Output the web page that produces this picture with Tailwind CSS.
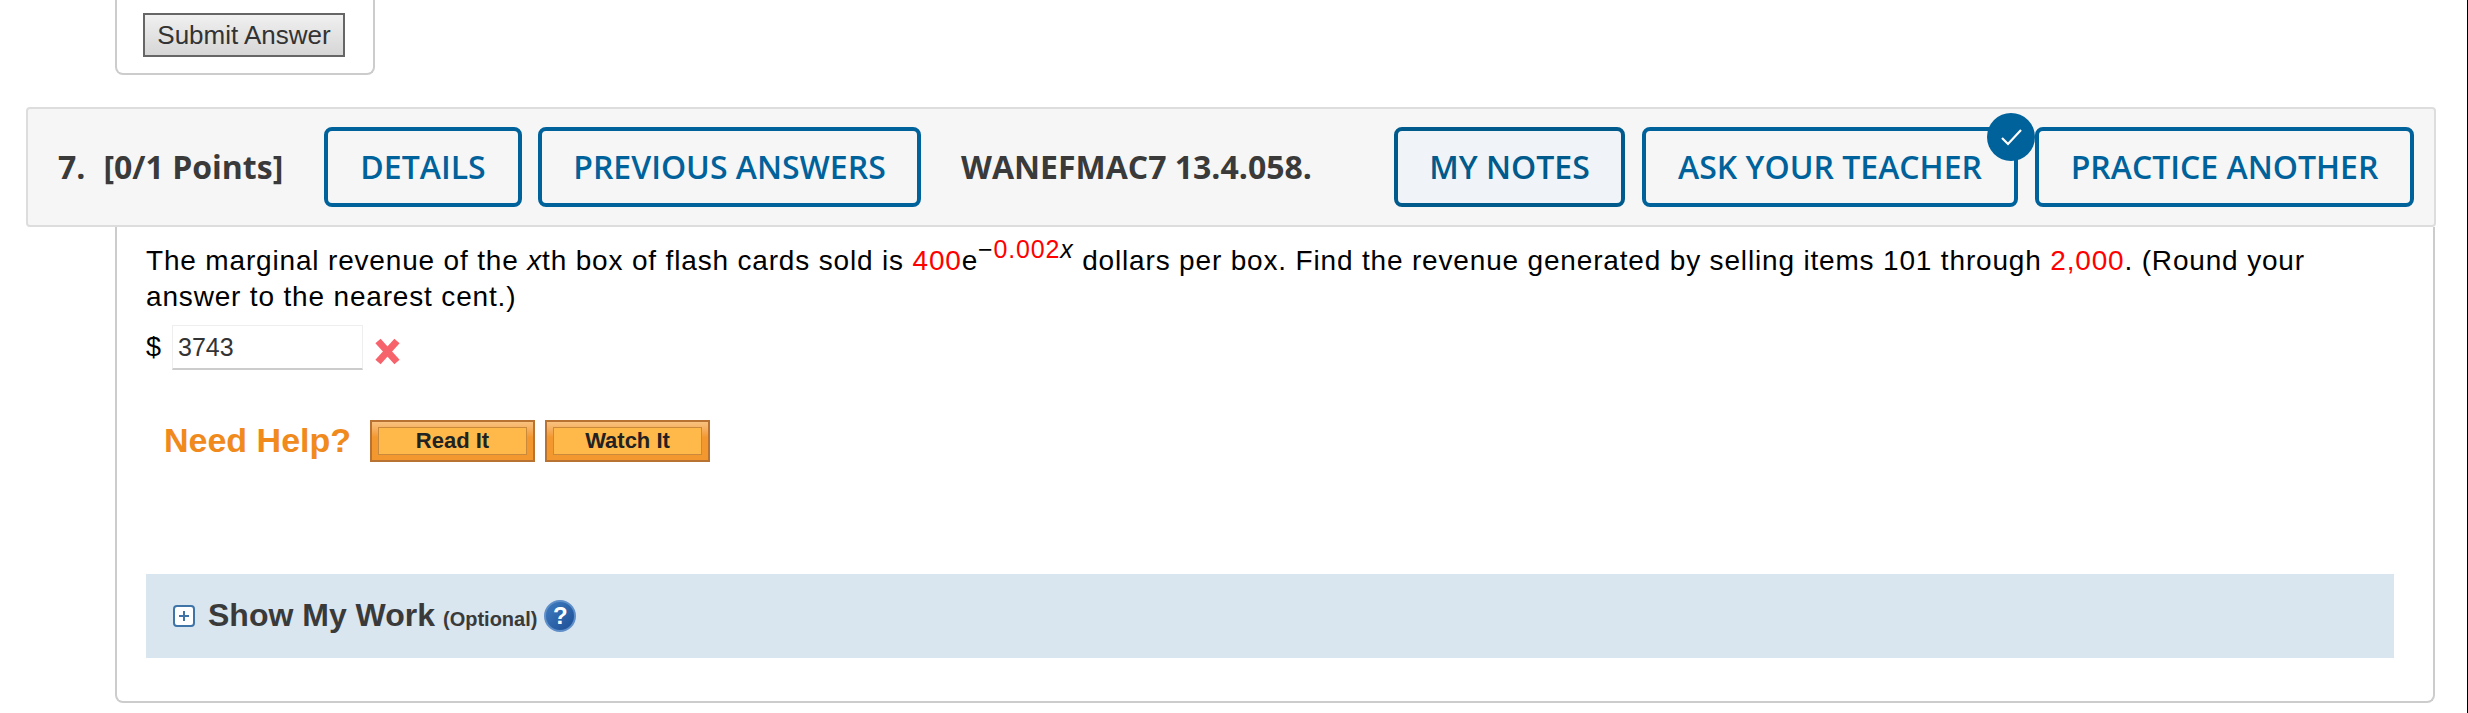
<!DOCTYPE html>
<html lang="en">

<head>
    <meta charset="UTF-8">
    <title>Question 7</title>
    <script src="https://cdn.jsdelivr.net/npm/@tailwindcss/browser@4"></script>
</head>

<body class="bg-white h-[713px] overflow-hidden font-['Liberation_Sans',sans-serif]">
    <div class="h-[713px] w-[2468px] overflow-hidden border-r border-black">

        <!-- previous question, cut off at the top -->
        <div class="ml-[115px] w-[260px] h-[75px] border-x-2 border-b-2 border-[#ccc] rounded-b-lg pl-[26px] pt-[13px]">
            <button class="w-[202px] h-[44px] border-2 border-[#666] bg-gradient-to-b from-[#f0f0f0] to-[#d6d6d6] text-[26px] text-[#333] leading-none">Submit Answer</button>
        </div>

        <!-- header bar -->
        <div class="relative mt-[32px] ml-[26px] w-[2410px] h-[120px] flex items-center bg-[#f6f6f6] border-2 border-[#ddd] rounded font-['Open_Sans',sans-serif] font-semibold text-[32px] text-[#3a3a3a]">
            <div class="w-[296px] pl-[30px] font-bold text-[32px] flex gap-[18px]"><span>7.</span><span>[0/1 Points]</span></div>
            <a class="w-[198px] h-[80px] flex items-center justify-center border-4 border-[#00629b] rounded-lg text-[#00629b]">DETAILS</a>
            <a class="ml-[16px] w-[383px] h-[80px] flex items-center justify-center border-4 border-[#00629b] rounded-lg text-[#00629b]">PREVIOUS ANSWERS</a>
            <span class="ml-[40px] w-[433px] font-bold text-[32px]">WANEFMAC7 13.4.058.</span>
            <a class="w-[231px] h-[80px] flex items-center justify-center border-4 border-[#005a8c] rounded-lg bg-[#f0f4f8] text-[#005a8c]">MY NOTES</a>
            <a class="ml-[17px] w-[376px] h-[80px] flex items-center justify-center border-4 border-[#00629b] rounded-lg text-[#00629b]">ASK YOUR TEACHER</a>
            <a class="ml-[17px] w-[379px] h-[80px] flex items-center justify-center border-4 border-[#00629b] rounded-lg text-[#00629b]">PRACTICE ANOTHER</a>
            <!-- has-note badge -->
            <span class="absolute left-[1959px] top-[4px] w-[48px] h-[48px] rounded-full bg-[#00629b] flex items-center justify-center">
                <svg width="24" height="24" viewBox="0 0 24 24" fill="none" stroke="white" stroke-width="2.2">
                    <path d="M3 13l6 6L22 5" />
                </svg>
            </span>
        </div>

        <!-- question body -->
        <div class="ml-[115px] w-[2320px] h-[476px] border-x-2 border-b-2 border-[#ccc] rounded-b-lg pl-[29px] pr-[39px]">
            <p class="pt-[16px] text-[28px] leading-[36px] text-black tracking-[0.83px]">
                The marginal revenue of the <i>x</i>th box of flash cards sold is <span class="text-[#f00]">400</span>e<sup class="text-[25px] leading-none"><span>&minus;</span><span class="text-[#f00]">0.002</span><i>x</i></sup> dollars per box. Find the revenue generated by selling items 101 through <span class="text-[#f00]">2,000</span>. (Round your answer to the nearest cent.)
            </p>

            <div class="mt-[10px] flex items-center text-[27px] text-black">
                <span>$</span>
                <input type="text" value="3743" class="ml-[11px] w-[191px] h-[45px] px-[5px] border border-[#eee] border-b-2 border-b-[#ccc] text-[25px] text-[#333]">
                <svg class="ml-[11px] mt-[8px]" width="27" height="27" viewBox="0 0 27 27" stroke="#f7636b" stroke-width="7">
                    <path d="M4 3l19 21M23 3L4 24" />
                </svg>
            </div>

            <div class="mt-[50px] ml-[18px] flex items-center">
                <span class="w-[206px] mb-[3px] text-[34px] font-bold text-[#f08a1d] leading-none">Need Help?</span>
                <a class="w-[165px] h-[42px] px-[6px] py-[5px] border-2 border-[#b87333] bg-gradient-to-b from-[#f8c27f] to-[#f3982f] to-40% flex">
                    <span class="flex-1 flex items-center justify-center border border-[#c98a3c] bg-[#ffb94a] text-[22px] font-bold text-[#222] leading-none">Read It</span>
                </a>
                <a class="ml-[10px] w-[165px] h-[42px] px-[6px] py-[5px] border-2 border-[#b87333] bg-gradient-to-b from-[#f8c27f] to-[#f3982f] to-40% flex">
                    <span class="flex-1 flex items-center justify-center border border-[#c98a3c] bg-[#ffb94a] text-[22px] font-bold text-[#222] leading-none">Watch It</span>
                </a>
            </div>

            <!-- show my work -->
            <div class="mt-[112px] h-[84px] flex items-center pl-[27px] bg-[#d9e5ef] text-[#3a3a3a]">
                <span class="w-[22px] h-[22px] flex items-center justify-center border-2 border-[#3f74a8] bg-white rounded-sm">
                    <svg width="12" height="12" viewBox="0 0 12 12" stroke="#3f74a8" stroke-width="2"><path d="M6 1v10M1 6h10" /></svg>
                </span>
                <span class="ml-[13px] mb-[2px] text-[32px] font-bold">Show My Work</span>
                <span class="ml-[8px] mt-[6px] text-[20px] font-bold">(Optional)</span>
                <span class="ml-[7px] w-[32px] h-[32px] rounded-full border-2 border-[#5f8fc8] bg-gradient-to-br from-[#3f7cc0] to-[#1d4f96] flex items-center justify-center text-white text-[24px] font-bold leading-none">?</span>
            </div>
        </div>
    </div>
</body>

</html>
